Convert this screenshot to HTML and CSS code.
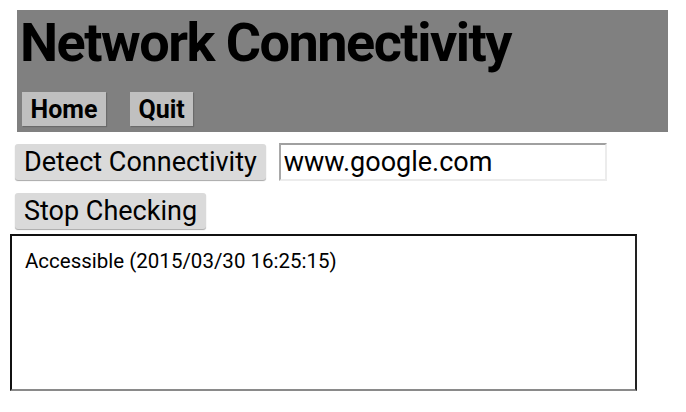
FILE: index.html
```html
<!DOCTYPE html>
<html>
<head>
<meta charset="utf-8">
<link rel="stylesheet" href="styles.css">
</head>
<body>
<header class="header">
  <h1 class="title">Network Connectivity</h1>
  <nav class="nav">
    <button class="nav-btn">Home</button>
    <button class="nav-btn">Quit</button>
  </nav>
</header>
<div class="controls">
  <div class="row">
    <button class="btn">Detect Connectivity</button>
    <input class="url" type="text" value="www.google.com">
  </div>
  <div class="row">
    <button class="btn">Stop Checking</button>
  </div>
</div>
<div class="output">Accessible (2015/03/30 16:25:15)</div>
</body>
</html>
```
FILE: styles.css
```css
html, body {
  margin: 0;
  padding: 0;
  background: #ffffff;
  font-family: Roboto, "Liberation Sans", sans-serif;
}
body {
  padding-top: 10px;
}
.header {
  margin-left: 17px;
  width: 651px;
  height: 122px;
  background: #808080;
  box-sizing: border-box;
  padding-left: 3px;
  padding-top: 2px;
}
.title {
  margin: 0;
  font-size: 54px;
  letter-spacing: -1.5px;
  font-weight: 700;
  line-height: 62px;
  color: #000;
}
.nav {
  display: flex;
  gap: 24px;
  margin-top: 18px;
  padding-left: 2px;
}
.nav-btn {
  font-family: Roboto, "Liberation Sans", sans-serif;
  font-weight: 700;
  font-size: 25px;
  height: 34px;
  padding: 0 8.5px;
  border: none;
  background: #c0c0c0;
  color: #000;
  box-shadow: 1px 1px 1px #6a6a6a;
}
.controls {
  padding-left: 15px;
  padding-top: 11px;
  display: flex;
  flex-direction: column;
  gap: 12px;
}
.row {
  display: flex;
  align-items: center;
  gap: 13px;
}
.btn {
  font-family: Roboto, "Liberation Sans", sans-serif;
  font-size: 27px;
  height: 36px;
  padding: 0 9px;
  border: none;
  border-radius: 3px;
  background: #dadada;
  color: #000;
  box-shadow: 0 1px 1px #a8a8a8;
}
.url {
  font-family: Roboto, "Liberation Sans", sans-serif;
  font-size: 27px;
  width: 328px;
  height: 38px;
  box-sizing: border-box;
  padding: 0 3px;
  border-style: solid;
  border-width: 2px;
  border-color: #a0a0a0 #ececec #ececec #a8a8a8;
  color: #000;
  background: #fff;
  outline: none;
}
.output {
  margin: 5px 0 0 10px;
  width: 627px;
  height: 157px;
  box-sizing: border-box;
  border-style: solid;
  border-width: 2px;
  border-color: #111 #222 #8a8a8a #111;
  padding: 13px 13px;
  font-size: 20.5px;
  color: #000;
}
```
